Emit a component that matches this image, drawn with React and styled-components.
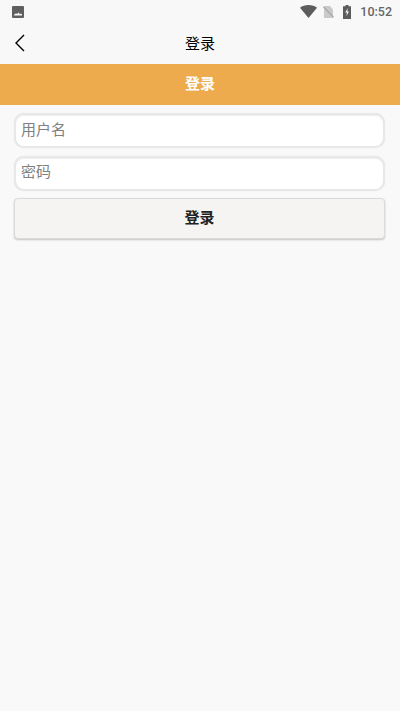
import React from "react";
import styled, { createGlobalStyle } from "styled-components";

const Global = createGlobalStyle`
  html, body {
    margin: 0;
    padding: 0;
    background: #f9f9f9;
  }
  * { box-sizing: border-box; }
`
const Page = styled.div`
  width: 400px;
  height: 711px;
  overflow: hidden;
  background: #f9f9f9;
  font-family: "Noto Sans CJK SC", "Liberation Sans", sans-serif;
`
const StatusBar = styled.div`
  height: 24px;
  display: flex;
  align-items: center;
  padding: 0 8px 1px 12px;
  background: #f8f8f8;
`
const StatusIcons = styled.div`
  margin-left: auto;
  display: flex;
  align-items: center;
`
const SimIcon = styled.svg`
  margin-left: 6px;
`
const BatteryIcon = styled.svg`
  margin-left: 9px;
`
const Clock = styled.span`
  font-family: Roboto, "Liberation Sans", sans-serif;
  font-size: 12.5px;
  font-weight: 500;
  color: #666;
  margin-left: 9px;
`
const NavBar = styled.div`
  height: 40px;
  display: grid;
  grid-template-columns: 40px 1fr 40px;
  align-items: center;
  background: #f8f8f8;
`
const BackButton = styled.div`
  display: flex;
  align-items: center;
  padding: 0 0 3px 14px;
  height: 100%;
`
const NavTitle = styled.div`
  text-align: center;
  font-size: 15px;
  color: #000;
  padding-bottom: 4px;
`
const Banner = styled.div`
  height: 41px;
  display: flex;
  align-items: center;
  justify-content: center;
  padding-bottom: 5px;
  background: #eeab4e;
  color: #fff;
  font-size: 15px;
  font-weight: 700;
`
const Form = styled.form`
  display: flex;
  flex-direction: column;
  gap: 8px;
  padding: 8px 15px 0 14px;
`
const Field = styled.input`
  display: block;
  width: 100%;
  height: 35px;
  padding: 0 5px ${(props) => props.$lift}px;
  border: 2px solid #e8e8e8;
  border-radius: 10px;
  background: #fff;
  box-shadow: inset 0 1px 1px #eee, 0 0 1px #ddd;
  outline: none;
  font-family: inherit;
  font-size: 15px;
  color: #333;
  &::placeholder { color: #808080; opacity: 1; }
`
const Submit = styled.button`
  height: 41px;
  margin-top: -1px;
  border: 1px solid #dcdad6;
  border-radius: 4px;
  background: #f5f4f2;
  box-shadow: 0 1px 2px rgba(0, 0, 0, 0.22);
  font-family: inherit;
  font-size: 15px;
  font-weight: 700;
  color: #222;
  padding: 0 0 5px;
`

const App = () => {
  return (
    <>
      <Global />
      <Page>
        <StatusBar>
          <svg width="12" height="12" viewBox="0 0 12 12">
            <rect width="12" height="12" rx="1" fill="#5f5f5f" />
            <path d="M2 9.5h8V8.6L9 7.4 8 8.2 6.6 6.6 5.2 8 4 7.2 2 8.8z" fill="#f5f5f5" />
          </svg>
          <StatusIcons>
            <svg width="17" height="13" viewBox="0 0 17 13">
              <path d="M0 2.8C2.1 1 5.1 0 8.5 0s6.4 1 8.5 2.8L8.5 13z" fill="#5c5c5c" />
            </svg>
            <SimIcon width="11" height="12" viewBox="0 0 11 12">
              <path d="M1 0h6l3 3.5V12H1z" fill="#c9c9c9" />
              <path d="M0 .5L11 11.5" stroke="#8f8f8f" strokeWidth="1" />
            </SimIcon>
            <BatteryIcon width="8" height="14" viewBox="0 0 8 14">
              <path d="M2.5 0h3v1.2H8V14H0V1.2h2.5z" fill="#5c5c5c" />
              <path d="M4.8 3L2.2 7.6h1.7l-.4 3.4L6 6.4H4.3z" fill="#f5f5f5" />
            </BatteryIcon>
            <Clock>10:52</Clock>
          </StatusIcons>
        </StatusBar>
        <NavBar>
          <BackButton>
            <svg width="12" height="18" viewBox="0 0 12 18" fill="none">
              <path d="M10 1L2 9l8 8" stroke="#000" strokeWidth="1.4" />
            </svg>
          </BackButton>
          <NavTitle>登录</NavTitle>
        </NavBar>
        <Banner>登录</Banner>
        <Form>
          <Field placeholder="用户名" $lift={5} />
          <Field placeholder="密码" type="password" $lift={7} />
          <Submit type="button">登录</Submit>
        </Form>
      </Page>
    </>
  )
}
export default App;
